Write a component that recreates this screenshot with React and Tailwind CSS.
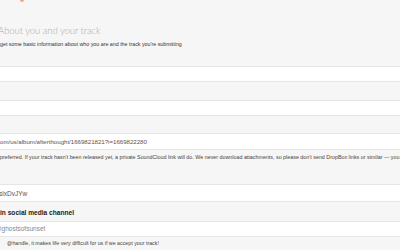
export default function App() {
  const sans = { fontFamily: '"Liberation Sans", Arial, sans-serif' };
  return (
    <div className="w-[400px] h-[250px] overflow-hidden bg-[#f6f6f6] relative" style={sans}>
      <div className="absolute left-[20px] top-[-3px] w-[4px] h-[5px] bg-[#f4a77a] rounded-full" />
      <div className="h-[66px] pt-[25px] -ml-[2px]">
        <h2 className="text-[9.6px] leading-[12px] tracking-[-0.1px] text-[#ababab] font-light" style={{ fontFamily: 'Lato, sans-serif' }}>
          About you and your track
        </h2>
        <p className="mt-[4px] ml-[2px] text-[5.3px] leading-[7px] text-[#333] whitespace-nowrap">
          get some basic information about who you are and the track you're submitting
        </p>
      </div>
      <div>
        <div className="h-[16px] bg-white border-y border-[#e6e6e6]" />
        <div className="h-[18px]" />
        <div className="h-[16px] bg-white border-y border-[#e6e6e6]" />
        <div className="h-[17px]" />
        <div className="h-[17px] bg-white border-y border-[#e6e6e6] flex items-center text-[6.1px] text-[#555] whitespace-nowrap">
          <span>om/us/album/afterthought/1669821821?i=1669822280</span>
        </div>
        <div className="h-[15px] flex items-center text-[5.35px] text-[#444] whitespace-nowrap">
          preferred. If your track hasn't been released yet, a private SoundCloud link will do. We never download attachments, so please don't send DropBox links or similar — you
        </div>
        <div className="h-[20px] border-b border-[#e6e6e6]" />
        <div className="h-[17px] bg-white border-b border-[#e6e6e6] flex items-center pt-[2px] text-[6.5px] text-[#555]">
          <span className="-ml-[1px]">slxDvJYw</span>
        </div>
        <div className="h-[19px] flex items-end pb-[3px] text-[6.6px] font-bold text-[#222] whitespace-nowrap">
          in social media channel
        </div>
        <div className="h-[16px] bg-white border-y border-[#e6e6e6] flex items-center text-[6.5px] text-[#888]">
          <span className="-ml-[5px]">@ghostsofsunset</span>
        </div>
        <div className="h-[14px] flex items-center pl-[7px] text-[5.3px] text-[#444] whitespace-nowrap">
          @handle, it makes life very difficult for us if we accept your track!
        </div>
      </div>
    </div>
  );
}
